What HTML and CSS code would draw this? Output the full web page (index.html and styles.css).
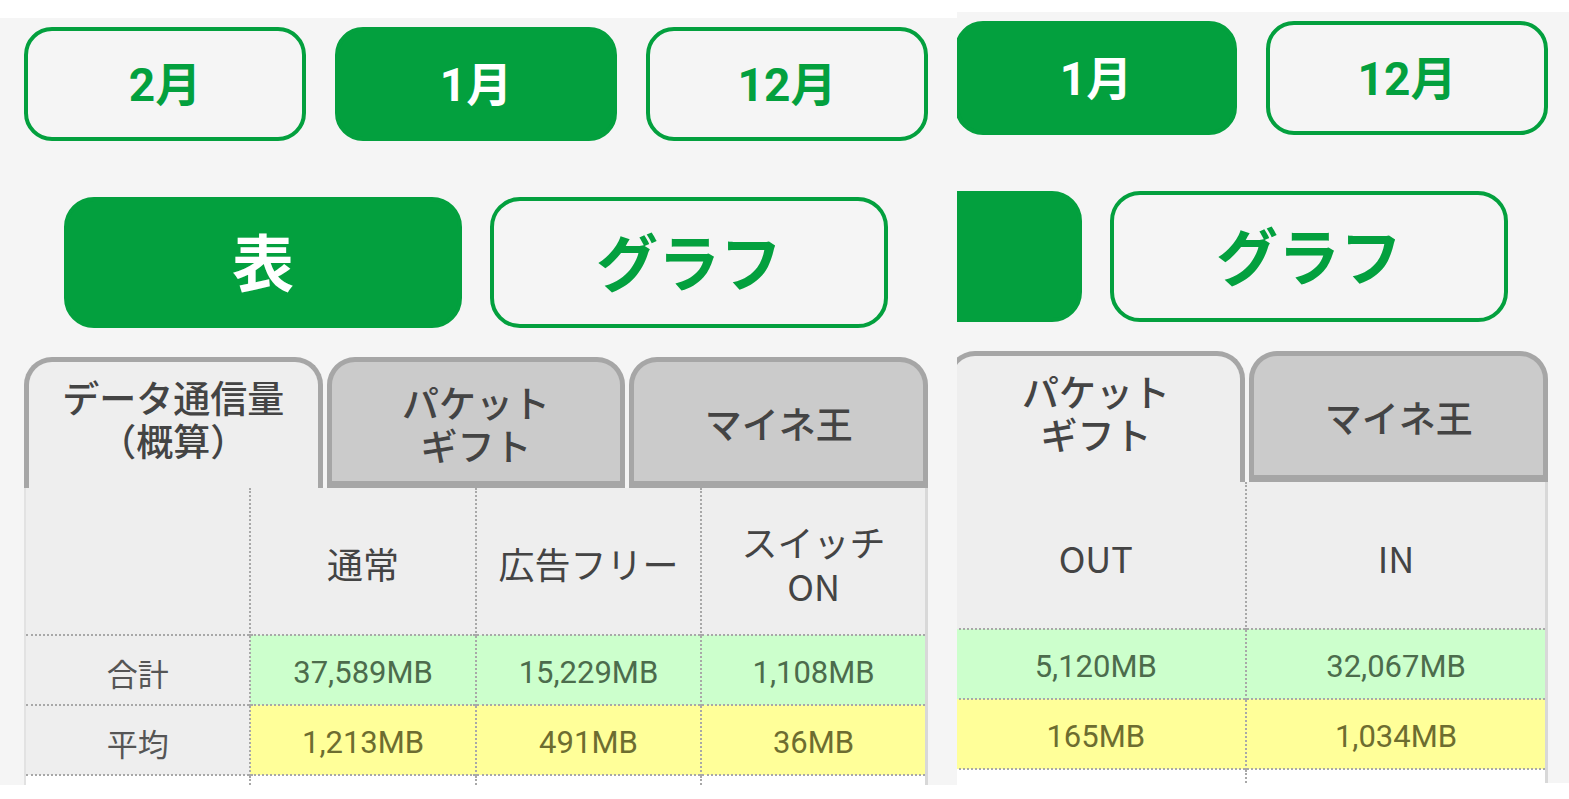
FILE: index.html
```html
<!DOCTYPE html>
<html lang="ja">
  <head>
    <meta charset="UTF-8">
    <title>データ通信量</title>
    <link rel="stylesheet" href="styles.css">
  </head>
  <body>
    <div class="screens">
      <section class="screen screen-left">
        <div class="page">
          <div class="months">
            <button class="btn month">2月</button>
            <button class="btn month on">1月</button>
            <button class="btn month">12月</button>
          </div>
          <div class="views">
            <button class="btn view on">表</button>
            <button class="btn view">グラフ</button>
          </div>
          <div class="tabs">
            <div class="tab active">データ通信量<br>（概算）</div>
            <div class="tab">パケット<br>ギフト</div>
            <div class="tab">マイネ王</div>
          </div>
          <table class="usage">
            <tr class="head">
              <th></th>
              <th>通常</th>
              <th>広告フリー</th>
              <th>スイッチ<br>ON</th>
            </tr>
            <tr class="total">
              <th>合計</th>
              <td>37,589MB</td>
              <td>15,229MB</td>
              <td>1,108MB</td>
            </tr>
            <tr class="average">
              <th>平均</th>
              <td>1,213MB</td>
              <td>491MB</td>
              <td>36MB</td>
            </tr>
            <tr class="day">
              <th></th>
              <td></td>
              <td></td>
              <td></td>
            </tr>
          </table>
        </div>
      </section>

      <!-- same page, packet gift tab, scrolled sideways: parts left of the edge are left empty -->
      <section class="screen screen-right">
        <div class="page scrolled">
          <div class="months">
            <button class="btn month"></button>
            <button class="btn month on">1月</button>
            <button class="btn month">12月</button>
          </div>
          <div class="views">
            <button class="btn view on"></button>
            <button class="btn view">グラフ</button>
          </div>
          <div class="tabs">
            <div class="tab"></div>
            <div class="tab active">パケット<br>ギフト</div>
            <div class="tab">マイネ王</div>
          </div>
          <table class="usage">
            <tr class="head">
              <th></th>
              <th>OUT</th>
              <th>IN</th>
            </tr>
            <tr class="total">
              <th></th>
              <td>5,120MB</td>
              <td>32,067MB</td>
            </tr>
            <tr class="average">
              <th></th>
              <td>165MB</td>
              <td>1,034MB</td>
            </tr>
            <tr class="day">
              <th></th>
              <td></td>
              <td></td>
            </tr>
          </table>
        </div>
      </section>
    </div>
  </body>
</html>
```

FILE: styles.css
```css
body {
  margin: 0;
  background-color: #ffffff;
  font-family: Roboto, "Noto Sans CJK JP", sans-serif;
  color: #444444;
}

.screens {
  display: flex;
  align-items: flex-start;
  width: 1569px;
  height: 799px;
  overflow: hidden;
}

.screen {
  background-color: #f5f5f5;
  overflow: hidden;
}

.screen-left {
  width: 957px;
  height: 767px;
  margin-top: 18px;
}

.screen-right {
  flex: 1;
  height: 771px;
  margin-top: 12px;
}

.page {
  width: 956px;
  padding: 9px 28px 0 24px;
  box-sizing: border-box;
}

.page.scrolled {
  margin-left: -337px;
}

/* buttons */

.btn {
  font-family: Roboto, "Noto Sans CJK JP", sans-serif;
  font-weight: 700;
  color: #03a03e;
  background-color: transparent;
  border: 4px solid #03a03e;
  box-sizing: border-box;
  padding: 0 0 6px;
  cursor: pointer;
}

.btn.on {
  background-color: #03a03e;
  color: #ffffff;
}

.months {
  display: flex;
  gap: 29px;
}

.month {
  width: 282px;
  height: 114px;
  border-radius: 28px;
  font-size: 46px;
}

.views {
  display: flex;
  gap: 28px;
  margin-top: 56px;
  padding-left: 40px;
}

.view {
  width: 398px;
  height: 131px;
  border-radius: 30px;
  font-size: 62px;
}

/* tabs */

.tabs {
  display: flex;
  gap: 4px;
  margin-top: 29px;
}

.tab {
  width: 299px;
  height: 131px;
  box-sizing: border-box;
  display: flex;
  align-items: center;
  justify-content: center;
  text-align: center;
  font-family: "Noto Sans CJK JP", sans-serif;
  font-size: 37px;
  font-weight: 500;
  line-height: 43px;
  color: #444444;
  background-color: #cbcbcb;
  border: 5px solid #a6a6a6;
  border-bottom-width: 7px;
  border-radius: 28px 28px 0 0;
  padding-top: 4px;
}

.tab.active {
  background-color: #eeeeee;
  border-bottom: none;
  padding-top: 0;
  padding-bottom: 12px;
}

/* table */

.usage {
  width: 904px;
  table-layout: fixed;
  border-collapse: collapse;
  border-left: 2px solid #e2e2e2;
  border-right: 3px solid #d8d8d8;
}

.usage th,
.usage td {
  padding: 0;
  text-align: center;
  vertical-align: middle;
  border-left: 2px dotted #a8a8a8;
}

.usage tr + tr th,
.usage tr + tr td {
  border-top: 2px dotted #a8a8a8;
}

.usage th:first-child {
  border-left: none;
}

.head th {
  height: 142px;
  padding-top: 4px;
  background-color: #eeeeee;
  font-family: "Noto Sans CJK JP", sans-serif;
  font-size: 36px;
  font-weight: 400;
  line-height: 44px;
  color: #444444;
}

.total th,
.average th,
.day th {
  background-color: #eeeeee;
  font-family: "Noto Sans CJK JP", sans-serif;
  font-size: 31px;
  font-weight: 400;
  color: #555555;
}

.total th,
.average th,
.total td,
.average td {
  height: 64px;
  padding-top: 4px;
}

.total td,
.average td {
  font-size: 31px;
}

.total td {
  background-color: #ccffcc;
  color: #4c6c4c;
}

.average td {
  background-color: #ffff99;
  color: #6d6d30;
}

.day th,
.day td {
  height: 60px;
  background-color: #ffffff;
}
```
